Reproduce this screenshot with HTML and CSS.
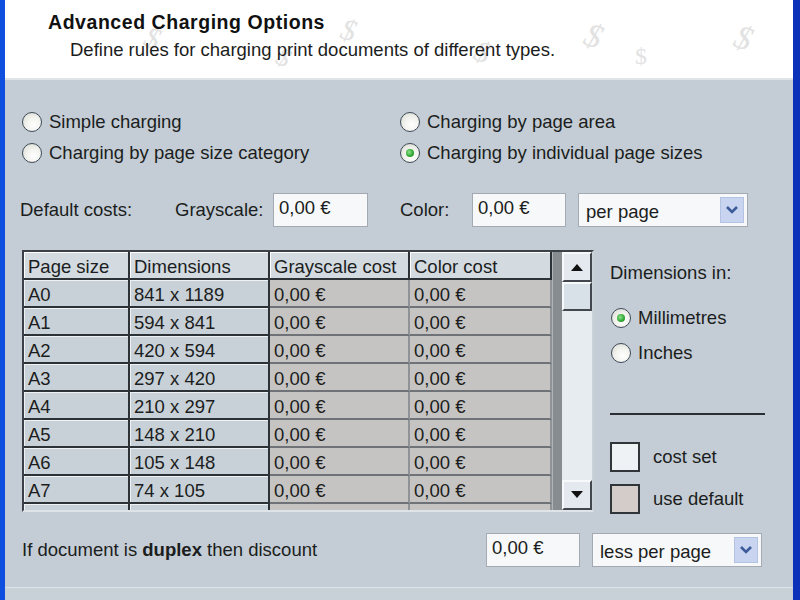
FILE: index.html
```html
<!DOCTYPE html>
<html>
<head>
<meta charset="utf-8">
<link rel="stylesheet" href="styles.css">
</head>
<body>
<div class="window">
  <div class="header">
    <div class="title">Advanced Charging Options</div>
    <div class="subtitle">Define rules for charging print documents of different types.</div>
    <span class="dollar d1">$</span>
    <span class="dollar d2">$</span>
    <span class="dollar d3">$</span>
    <span class="dollar d4">$</span>
    <span class="dollar d5">$</span>
    <span class="dollar d6">$</span>
    <span class="dollar d7">$</span>
  </div>
  <div class="panel">
    <div class="modes">
      <div class="mode-col left">
        <div class="radio"><span class="circle"></span>Simple charging</div>
        <div class="radio"><span class="circle"></span>Charging by page size category</div>
      </div>
      <div class="mode-col">
        <div class="radio"><span class="circle"></span>Charging by page area</div>
        <div class="radio"><span class="circle checked"></span>Charging by individual page sizes</div>
      </div>
    </div>

    <div class="defaults">
      <span class="lbl-default">Default costs:</span>
      <span class="lbl-gray">Grayscale:</span>
      <div class="input w95">0,00 €</div>
      <span class="lbl-color">Color:</span>
      <div class="input w94">0,00 €</div>
      <div class="select w170">
        <span class="sel-text">per page</span>
        <span class="arrow"><svg width="14" height="10" viewBox="0 0 14 10"><path d="M2 2 L7 7 L12 2" fill="none" stroke="#3d5a9a" stroke-width="2.6"/></svg></span>
      </div>
    </div>

    <div class="main">
      <div class="table">
        <div class="grid">
          <div class="cell head">Page size</div>
          <div class="cell head">Dimensions</div>
          <div class="cell head">Grayscale cost</div>
          <div class="cell head">Color cost</div>

          <div class="cell">A0</div><div class="cell">841 x 1189</div><div class="cell cost">0,00 €</div><div class="cell cost">0,00 €</div>
          <div class="cell">A1</div><div class="cell">594 x 841</div><div class="cell cost">0,00 €</div><div class="cell cost">0,00 €</div>
          <div class="cell">A2</div><div class="cell">420 x 594</div><div class="cell cost">0,00 €</div><div class="cell cost">0,00 €</div>
          <div class="cell">A3</div><div class="cell">297 x 420</div><div class="cell cost">0,00 €</div><div class="cell cost">0,00 €</div>
          <div class="cell">A4</div><div class="cell">210 x 297</div><div class="cell cost">0,00 €</div><div class="cell cost">0,00 €</div>
          <div class="cell">A5</div><div class="cell">148 x 210</div><div class="cell cost">0,00 €</div><div class="cell cost">0,00 €</div>
          <div class="cell">A6</div><div class="cell">105 x 148</div><div class="cell cost">0,00 €</div><div class="cell cost">0,00 €</div>
          <div class="cell">A7</div><div class="cell">74 x 105</div><div class="cell cost">0,00 €</div><div class="cell cost">0,00 €</div>
          <div class="cell"></div><div class="cell"></div><div class="cell cost"></div><div class="cell cost"></div>
        </div>
        <div class="gutter"></div>
        <div class="scrollbar">
          <div class="sb-btn"><svg width="14" height="8" viewBox="0 0 14 8"><path d="M1 8 L7 1 L13 8 Z" fill="#111"/></svg></div>
          <div class="sb-thumb"></div>
          <div class="sb-track"></div>
          <div class="sb-btn"><svg width="14" height="8" viewBox="0 0 14 8"><path d="M1 0 L7 7 L13 0 Z" fill="#111"/></svg></div>
        </div>
      </div>

      <div class="side">
        <div class="dim-label">Dimensions in:</div>
        <div class="radio side-radio first"><span class="circle checked"></span>Millimetres</div>
        <div class="radio side-radio"><span class="circle"></span>Inches</div>
        <div class="rule"></div>
        <div class="legend"><span class="swatch set"></span>cost set</div>
        <div class="legend"><span class="swatch def"></span>use default</div>
      </div>
    </div>

    <div class="duplex">
      <span class="duplex-text">If document is <b>duplex</b> then discount</span>
      <div class="input w94">0,00 €</div>
      <div class="select w170">
        <span class="sel-text">less per page</span>
        <span class="arrow"><svg width="14" height="10" viewBox="0 0 14 10"><path d="M2 2 L7 7 L12 2" fill="none" stroke="#3d5a9a" stroke-width="2.6"/></svg></span>
      </div>
    </div>
  </div>
  <div class="footer"></div>
</div>
</body>
</html>
```

FILE: styles.css
```css
* { box-sizing: border-box; }
html, body { margin: 0; padding: 0; }
body {
  width: 800px;
  height: 600px;
  overflow: hidden;
  font-family: "Liberation Sans", Arial, sans-serif;
  color: #1b1d20;
  background: #c4cdd5;
}
.window {
  width: 800px;
  height: 600px;
  border-left: 5px solid #0f4fe0;
  border-right: 7px solid #0b32b8;
  display: flex;
  flex-direction: column;
  background: #c4cdd5;
}
.header {
  position: relative;
  height: 80px;
  flex: none;
  background: #ffffff;
  padding: 9px 0 0 43px;
  border-bottom: 2px solid #dfe4e8;
  overflow: hidden;
}
.title {
  font-weight: bold;
  font-size: 19.5px;
  letter-spacing: 0.55px;
  line-height: 26px;
  color: #111;
  position: relative;
  z-index: 1;
}
.subtitle {
  font-size: 18.5px;
  line-height: 24px;
  padding-left: 22px;
  margin-top: 3px;
  position: relative;
  z-index: 1;
}
.dollar {
  position: absolute;
  font-family: "Liberation Serif", serif;
  font-style: italic;
  color: #e2e2e2;
  font-size: 30px;
  line-height: 32px;
  z-index: 0;
}
.d1 { left: 140px; top: 22px; transform: rotate(20deg); }
.d2 { left: 272px; top: 42px; transform: rotate(25deg); font-size: 26px; }
.d3 { left: 336px; top: 14px; transform: rotate(15deg); }
.d4 { left: 470px; top: 36px; transform: rotate(20deg); }
.d5 { left: 580px; top: 20px; transform: rotate(20deg); font-size: 34px; }
.d6 { left: 630px; top: 40px; font-size: 24px; font-style: normal; }
.d7 { left: 730px; top: 22px; transform: rotate(20deg); font-size: 34px; }

.panel {
  flex: 1;
  padding: 26px 0 0 15px;
  border-bottom: 1px solid #dde3e8;
}
.modes {
  display: flex;
}
.mode-col { display: flex; flex-direction: column; }
.mode-col.left { width: 378px; }
.radio {
  display: flex;
  align-items: center;
  height: 31px;
  font-size: 18.5px;
  padding-left: 2px;
}
.circle {
  width: 20px;
  height: 20px;
  border-radius: 50%;
  border: 1.5px solid #3d4a57;
  background: radial-gradient(circle at 60% 65%, #ffffff 0%, #f2f2ee 45%, #d8d8d0 100%);
  margin-right: 7px;
  display: flex;
  align-items: center;
  justify-content: center;
  flex: none;
}
.circle.checked::after {
  content: "";
  width: 8px;
  height: 8px;
  border-radius: 50%;
  background: radial-gradient(circle at 40% 40%, #8fe08f 0%, #2ea62e 60%, #1d801d 100%);
}

.defaults {
  display: flex;
  align-items: center;
  margin-top: 25px;
  height: 34px;
  font-size: 18.5px;
}
.lbl-default { width: 155px; }
.lbl-gray { width: 98px; }
.lbl-color { width: 72px; margin-left: 32px; }
.input {
  height: 34px;
  background: #f6f8fa;
  border: 1px solid #a3aab2;
  font-size: 18.5px;
  padding: 3px 0 0 5px;
}
.w95 { width: 95px; }
.w94 { width: 94px; }
.select {
  height: 34px;
  margin-left: 12px;
  background: #f6f8fa;
  border: 1px solid #a3aab2;
  display: flex;
  align-items: center;
  justify-content: space-between;
  padding: 0 3px 0 7px;
  font-size: 18.5px;
}
.w170 { width: 170px; }
.sel-text { padding-top: 4px; }
.arrow {
  width: 24px;
  height: 26px;
  background: #c8d4f0;
  border: 1px solid #b4c2e4;
  display: flex;
  align-items: center;
  justify-content: center;
}

.main {
  display: flex;
  align-items: flex-start;
  height: 262px;
  margin-top: 23px;
}
.table {
  width: 572px;
  height: 262px;
  margin-left: 2px;
  border: 2px solid #3b4147;
  border-right-color: #c9d0d6;
  border-bottom-color: #dfe4e8;
  display: flex;
  overflow: hidden;
  background: #c4cdd5;
}
.grid {
  display: grid;
  grid-template-columns: 106px 140px 140px 142px;
  grid-auto-rows: 28px;
  width: 528px;
  align-content: start;
}
.cell {
  font-size: 18.5px;
  padding: 4px 0 0 4px;
  border-right: 2px solid #2d3237;
  border-bottom: 2px solid #2d3237;
  box-shadow: inset 1px 1px 0 #eef2f5;
  background: #c9d1d8;
  white-space: nowrap;
  overflow: hidden;
  line-height: 22px;
}
.cell.head {
  background: #d3dae0;
  box-shadow: inset 1px 1px 0 #ffffff;
}
.cell.cost {
  background: #c6c4c2;
  border-right-color: #8f9296;
  border-bottom-color: #6f7276;
  box-shadow: none;
}
.gutter {
  width: 10px;
  background: #878c91;
  border-left: 1px solid #b0b5ba;
}
.scrollbar {
  width: 30px;
  display: flex;
  flex-direction: column;
  background: #e8edf1;
}
.sb-btn {
  height: 30px;
  background: #e3e9ee;
  border: 2px solid #41474d;
  border-top-color: #f7f9fb;
  border-left-color: #f7f9fb;
  display: flex;
  align-items: center;
  justify-content: center;
  flex: none;
}
.sb-thumb {
  height: 29px;
  background: #d9e1e8;
  border: 2px solid #41474d;
  border-top-color: #f7f9fb;
  border-left-color: #f7f9fb;
  flex: none;
}
.sb-track {
  flex: 1;
  background: #e6ecf0;
}

.side {
  margin-left: 16px;
  padding-top: 11px;
  display: flex;
  flex-direction: column;
  font-size: 18.5px;
}
.dim-label { height: 24px; line-height: 24px; }
.side-radio { height: 35px; padding-left: 1px; }
.side-radio.first { margin-top: 15px; }
.rule {
  width: 155px;
  height: 2px;
  background: #2a2f34;
  margin-top: 43px;
  margin-bottom: 27px;
}
.legend {
  display: flex;
  align-items: center;
  height: 30px;
  margin-bottom: 12px;
}
.legend:last-child { margin-bottom: 0; }
.swatch {
  width: 30px;
  height: 30px;
  border: 2px solid #30353a;
  margin-right: 13px;
}
.swatch.set { background: #eef2f4; }
.swatch.def { background: #d3ccc8; }

.duplex {
  display: flex;
  align-items: center;
  height: 34px;
  margin-top: 21px;
  margin-left: 2px;
  font-size: 18.5px;
}
.duplex-text { width: 464px; }
.footer {
  height: 12px;
  flex: none;
  background: #c8d1d8;
}
```
